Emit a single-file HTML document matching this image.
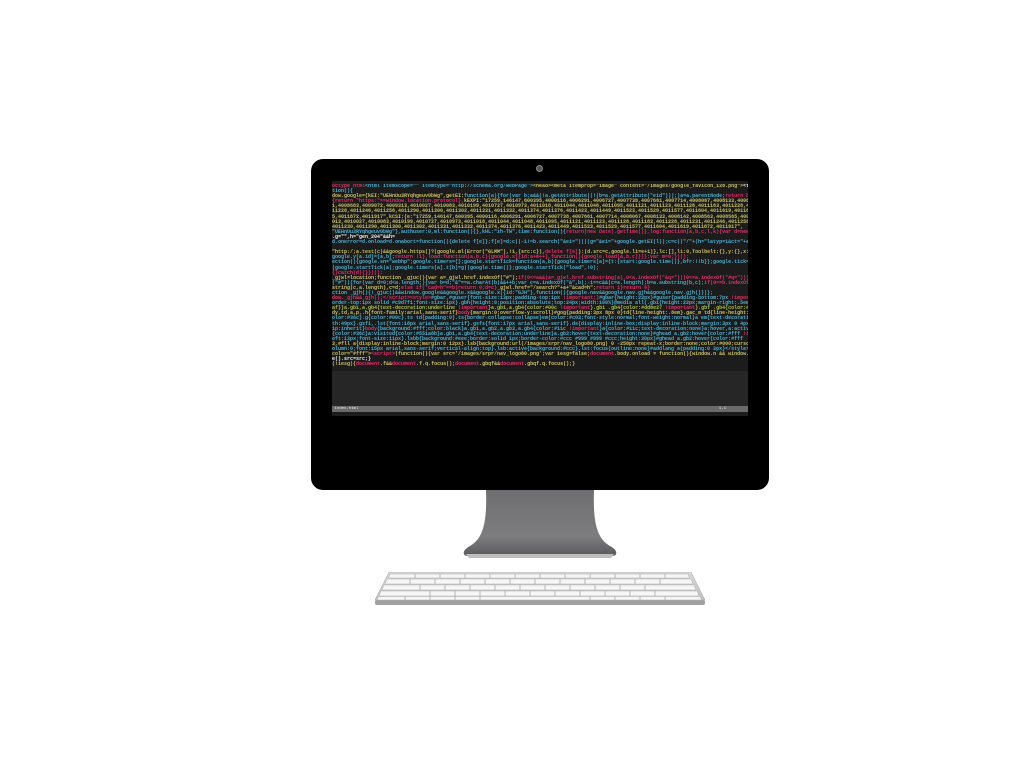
<!DOCTYPE html>
<html><head><style>
html,body{margin:0;padding:0;background:#fff;width:1024px;height:768px;overflow:hidden;position:relative}
.mon{position:absolute;left:311px;top:159px;width:458px;height:331px;background:#000;border-radius:12px}
.cam{position:absolute;left:536px;top:165px;width:7px;height:7px;border-radius:50%;background:#555;border:1px solid #888;box-sizing:border-box}
.scr{position:absolute;left:332px;top:181px;width:416px;height:235px;background:#1c1c1c;overflow:hidden}
.code{position:absolute;left:0;top:3px;width:416px;font-family:"Liberation Mono",monospace;font-size:5px;line-height:5.1px;white-space:pre;color:#ddd;overflow:hidden;font-weight:bold}
.gray{position:absolute;left:0;top:190px;width:416px;height:35px;background:#262626}
.bar{position:absolute;left:0;top:225px;width:416px;height:6px;background:#6a6a6a;font-family:"Liberation Mono",monospace;font-size:4px;color:#eee;line-height:6px}
.y{color:#c8c060}.p{color:#e0306a}.c{color:#4ab0d0}.g{color:#a8c040}.w{color:#eee}
.stand{position:absolute;left:460px;top:490px;width:160px;height:68px}
.kb{position:absolute;left:375px;top:572px;width:330px;height:34px}
</style></head><body>
<div class="mon"></div>
<div class="cam"></div>
<div class="scr">
<div class="code"><span class="p">octype html</span><span class="c">&lt;html itemscope="" itemtype="http://schema.org/WebPage"&gt;</span><span class="y">&lt;head&gt;&lt;meta itemprop="image" content="/images/google_favicon_128.png"&gt;</span><span class="w">&lt;title&gt;Google</span><span class="p">&lt;/title&gt;&lt;scr</span>
<span class="c">tion(){</span>
<span class="y">dow.google={kEI:"UEHnUu3RYqhgeuv0bWg",getEI:</span><span class="c">function(a){for(var b;a&amp;&amp;(!a.getAttribute||!(b=a.getAttribute("eid")));)a=a.parentNode;</span><span class="p">return b||google.kEI},https</span>
<span class="p">{return "https:"==window.location.protocol},</span><span class="y">kEXPI:"17259,146147,600395,4000116,4006291,4006727,4007738,4007661,4007714,4008067,4008133,4008142,4008</span>
<span class="y">1,4008683,4009072,4009313,4010027,4010083,4010199,4010727,4010973,4011018,4011044,4011048,4011095,4011121,4011123,4011128,4011183,4011228,4011231,40</span>
<span class="y">11228,4011246,4011258,4011290,4011300,4011302,4011331,4011332,4011374,4011376,4011423,4011449,4011523,4011529,4011577,4011604,4011619,4011872,401</span>
<span class="y">5,4011872,4011917",kCSI:{e:"17259,146147,600395,4000116,4006291,4006727,4007738,4007661,4007714,4008067,4008133,4008142,4008563,4008565,4008683,4</span>
<span class="y">013,4010027,4010083,4010199,4010727,4010973,4011018,4011044,4011048,4011095,4011121,4011123,4011128,4011183,4011228,4011231,4011246,4011258,4011</span>
<span class="y">4011230,4011290,4011300,4011302,4011331,4011332,4011374,4011376,4011423,4011449,4011523,4011529,4011577,4011604,4011619,4011872,4011917",</span>
<span class="c">"UEHnUu3RYqhgeuv0bWg"},authuser:0,ml:function(){},kHL:"zh-TW",time:function(){</span><span class="p">return(new Date).getTime()},log:function(a,b,c,l,k){var d=new</span>
<span class="w">.g="",h="gen_204"&amp;&amp;h=</span>
<span class="c">d.onerror=d.onload=d.onabort=function(){delete f[e]};f[e]=d;c||-1!=b.search("&amp;ei=")||(g="&amp;ei="+google.getEI(l));c=c||"/"+(h="latyp=1&amp;ct="+a+"&amp;cad="</span>

<span class="y">"http:/;a.test(c)&amp;&amp;google.https()?(google.ml(Error("GLMM"),!1,{src:c}),</span><span class="p">delete f[e]</span><span class="y">):(d.src=c,google.li=e+1)},lc:[],li:0,Toolbelt:{},y:{},x:function(a,</span>
<span class="c">google.y[a.id]=[a,b];</span><span class="p">return !1},load:function(a,b,c){google.x[{id:a+m++},function(){google.load(a,b,c)}]};var m=0;})();</span>
<span class="c">ection(){google.sn="webhp";google.timers={};google.startTick=function(a,b){google.timers[a]={t:{start:google.time()},bfr:!!b}};google.tick=function</span>
<span class="c">(google.startTick(a);google.timers[a].t[b]=g||google.time()};google.startTick("load",!0);</span>
<span class="p">{}catch(d){}})();</span>
<span class="y">_gjwl=location;function _gjuc(){var a=_gjwl.href.indexOf("#");</span><span class="p">if(0&lt;=a&amp;&amp;(a=_gjwl.href.substring(a),0&lt;a.indexOf("&amp;q=")||0&lt;=a.indexOf("#q=")))</span>
<span class="c">("#")){for(var d=0;d&lt;a.length;){var b=d;"&amp;"==a.charAt(b)&amp;&amp;++b;var c=a.indexOf("&amp;",b);-1==c&amp;&amp;(c=a.length);b=a.substring(b,c);</span><span class="p">if(0==b.indexOf("fp="))</span>
<span class="y">string(c,a.length),c=d;</span><span class="p">else if("cad=h"==b)return 0;d=c}</span><span class="y">_gjwl.href="/search?"+a+"&amp;cad=h";</span><span class="p">return 1}return 0}</span>
<span class="c">ction _gjh(){!_gjuc()&amp;&amp;window.google&amp;&amp;google.x&amp;&amp;google.x({id:"GJH"},function(){google.nav&amp;&amp;google.nav.gjh&amp;&amp;google.nav.gjh()})};</span>
<span class="p">dow._gjh&amp;&amp;_gjh();&lt;/script&gt;&lt;style&gt;</span><span class="c">#gbar,#guser{font-size:13px;padding-top:1px </span><span class="p">!important;}</span><span class="c">#gbar{height:22px}#guser{padding-bottom:7px </span><span class="p">!important;</span>
<span class="c">order-top:1px solid #c9d7f1;font-size:1px}.gbh{height:0;position:absolute;top:24px;width:100%}@media all{.gb1{height:22px;margin-right:.5em;vertical</span>
<span class="g">af}}a.gb1,a.gb4{text-decoration:underline </span><span class="p">!important</span><span class="g">}a.gb1,a.gb4{color:#00c </span><span class="p">!important</span><span class="g">}.gbi .gb4{color:#dd8e27 </span><span class="p">!important</span><span class="g">}.gbf .gb4{color:#900</span>
<span class="y">dy,td,a,p,.h{font-family:arial,sans-serif}</span><span class="p">body</span><span class="y">{margin:0;overflow-y:scroll}#gog{padding:3px 8px 0}td{line-height:.8em}.gac_m td{line-height:17px}</span>
<span class="c">olor:#36c}.g{color:#00c}.ts td{padding:0}.ts{border-collapse:collapse}em{color:#c03;font-style:normal;font-weight:normal}a em{text-decoration:underl</span>
<span class="c">th:49px}.gsfi,.lst{font:18px arial,sans-serif}.gsfs{font:17px arial,sans-serif}.ds{display:inline-box;display:inline-block;margin:3px 0 4px;margin-left</span>
<span class="c">1p:inherit}</span><span class="p">body</span><span class="c">{background:#fff;color:black}a.gb1,a.gb2,a.gb3,a.gb4{color:#11c </span><span class="p">!important</span><span class="c">}a{color:#11c;text-decoration:none}a:hover,a:active{te</span>
<span class="c">{color:#36c}a:visited{color:#551a8b}a.gb1,a.gb4{text-decoration:underline}a.gb3:hover{text-decoration:none}#ghead a.gb2:hover{color:#fff </span><span class="p">!important</span>
<span class="c">eft:13px;font-size:11px}.lsbb{background:#eee;border:solid 1px;border-color:#ccc #999 #999 #ccc;height:30px}#ghead a.gb2:hover{color:#fff</span>
<span class="y">3,#fll a{display:inline-block;margin:0 12px}.lsb{background:url(/images/srpr/nav_logo80.png) 0 -258px repeat-x;border:none;color:#000;cursor:pointer</span>
<span class="c">olumn:0;font:15px arial,sans-serif;vertical-align:top}.lsb:active{background:#ccc}.lst:focus{outline:none}#addlang a{padding:0 3px}&lt;/style&gt;</span><span class="p">&lt;script&gt;</span>
<span class="y">color="#fff"&gt;</span><span class="p">&lt;script&gt;</span><span class="y">(function(){var src='/images/srpr/nav_logo80.png';var iesg=false;</span><span class="p">document</span><span class="y">.body.onload = function(){window.n &amp;&amp; window.n();if (document.images</span>
<span class="w">e().src=src;}</span>
<span class="y">(!iesg){</span><span class="p">document</span><span class="y">.f&amp;&amp;</span><span class="p">document</span><span class="y">.f.q.focus();</span><span class="p">document</span><span class="y">.gbqf&amp;&amp;</span><span class="p">document</span><span class="y">.gbqf.q.focus();}</span></div>
<div class="gray"></div>
<div class="bar">&nbsp;index.html<span style="position:absolute;right:22px">1,1</span></div>
</div>
<svg class="stand" viewBox="0 0 160 68">
<defs><linearGradient id="sg" x1="0" y1="0" x2="0" y2="1"><stop offset="0" stop-color="#6e6e70"/><stop offset="0.7" stop-color="#7d7d80"/><stop offset="1" stop-color="#5a5a5c"/></linearGradient></defs>
<path d="M26 0 H134 C133 30 136 48 150 56 C158 60 158 66 152 66 H8 C2 66 2 60 10 56 C24 48 27 30 26 0 Z" fill="url(#sg)"/>
<path d="M6 64 H154 L151 68 H9 Z" fill="#bdbdbd"/>
</svg>
<svg class="kb" viewBox="0 0 330 34">
<defs><linearGradient id="kg" x1="0" y1="0" x2="0" y2="1"><stop offset="0" stop-color="#d8d8d8"/><stop offset="1" stop-color="#c0c0c0"/></linearGradient></defs>
<path d="M14 0 H316 L330 28 H0 Z" fill="url(#kg)" stroke="#aaa" stroke-width="0.5"/>
<rect x="0" y="28" width="330" height="5" rx="2" fill="#a0a0a0"/>
<g fill="#f6f6f6" stroke="#b0b0b0" stroke-width="0.5">
<path d="M15 2 H313 L314.5 6 H13.5 Z"/>
<path d="M12 7 H316 L318 12 H10 Z"/>
<path d="M9 13 H319 L321 18 H7 Z"/>
<path d="M6 19 H322 L324 24 H4 Z"/>
<path d="M3.5 24.5 H325 L326.5 28 H2 Z"/>
</g>
<g stroke="#a8a8a8" stroke-width="0.8">
<path d="M40 2V6M65 2V6M90 2V6M115 2V6M140 2V6M165 2V6M190 2V6M215 2V6M240 2V6M265 2V6M290 2V6"/>
<path d="M35 7V12M60 7V12M85 7V12M110 7V12M135 7V12M160 7V12M185 7V12M210 7V12M235 7V12M260 7V12M285 7V12"/>
<path d="M45 13V18M70 13V18M95 13V18M120 13V18M145 13V18M170 13V18M195 13V18M220 13V18M245 13V18M270 13V18"/>
<path d="M55 19V24M80 19V24M105 19V24M130 19V24M155 19V24M180 19V24M205 19V24M230 19V24M255 19V24M280 19V24"/>
<path d="M30 24.5V28M55 24.5V28M80 24.5V28M105 24.5V28M215 24.5V28M240 24.5V28M265 24.5V28M290 24.5V28"/>
</g>
</svg>
</body></html>
